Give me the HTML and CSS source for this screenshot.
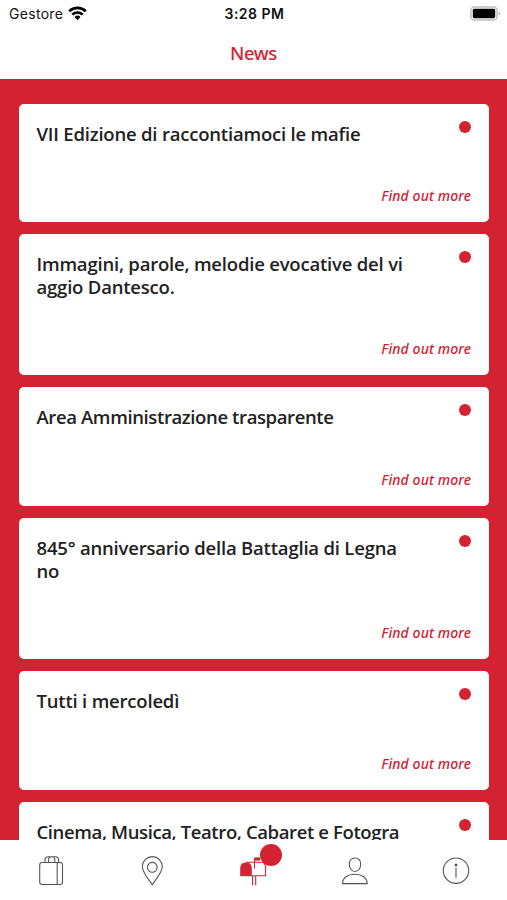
FILE: index.html
```html
<!DOCTYPE html>
<html lang="it">
<head>
  <meta charset="UTF-8" />
  <meta name="viewport" content="width=device-width, initial-scale=1.0" />
  <title>News</title>
  <link rel="stylesheet" href="styles.css">
</head>
<body>

  <div class="status-bar">
    <div class="carrier">
      <span>Gestore</span>
      <svg width="19" height="15" viewBox="0 0 19 15" fill="none" stroke="#000" stroke-width="2.6">
        <path d="M1.2 5.2a12 12 0 0 1 16.6 0" />
        <path d="M4.3 8.6a7.6 7.6 0 0 1 10.4 0" />
        <path d="M9.5 14.2l-3-3.2a4.4 4.4 0 0 1 6 0z" fill="#000" stroke="none" />
      </svg>
    </div>
    <div class="time">3:28 PM</div>
    <div class="battery">
      <svg width="31" height="15" viewBox="0 0 31 15">
        <rect x="0.9" y="0.9" width="26.2" height="13.2" rx="3.6" fill="#fff" stroke="#bdbdbd" stroke-width="1.5" />
        <rect x="2.8" y="2.8" width="22.4" height="9.4" rx="1.4" fill="#000" />
        <path d="M28.6 5.2q1.8.8 1.8 2.3t-1.8 2.3z" fill="#bdbdbd" />
      </svg>
    </div>
  </div>

  <h1>News</h1>

  <main class="news-list">
    <article class="card">
      <h2>VII Edizione di raccontiamoci le mafie</h2>
      <span class="dot"></span>
      <a class="more">Find out more</a>
    </article>
    <article class="card">
      <h2>Immagini, parole, melodie evocative del vi<br>aggio Dantesco.</h2>
      <span class="dot"></span>
      <a class="more">Find out more</a>
    </article>
    <article class="card">
      <h2 class="tight">Area Amministrazione trasparente</h2>
      <span class="dot"></span>
      <a class="more">Find out more</a>
    </article>
    <article class="card">
      <h2>845° anniversario della Battaglia di Legna<br>no</h2>
      <span class="dot"></span>
      <a class="more">Find out more</a>
    </article>
    <article class="card">
      <h2>Tutti i mercoledì</h2>
      <span class="dot"></span>
      <a class="more">Find out more</a>
    </article>
    <article class="card">
      <h2 class="tight">Cinema, Musica, Teatro, Cabaret e Fotogra</h2>
      <span class="dot"></span>
    </article>
  </main>

  <nav class="tabs">
    <a>
      <svg width="34" height="34" viewBox="0 0 34 34">
        <rect x="5.7" y="8.5" width="22.8" height="22" rx="2.4" />
        <path d="M23.2 8.5v22M11 8.5V6q0-3.2 3.2-3.2h7.2q3.2 0 3.2 3.2v2.5M14.6 8.5V6q0-3.2 3-3.2M18 2.8q2.8 0 2.8 3v2.7" />
      </svg>
    </a>
    <a>
      <svg width="34" height="34" viewBox="0 0 34 34">
        <path d="M17.3 30.6C14.5 26.6 7.3 18.6 7.3 12.6a10 10 0 0 1 20 0C27.3 18.6 20.1 26.6 17.3 30.6z" />
        <circle cx="17.3" cy="13.3" r="4.9" />
      </svg>
    </a>
    <a class="active">
      <svg width="34" height="34" viewBox="0 0 34 34">
        <path class="full" d="M4.2 21.7V14q0-5.6 5.8-5.6T15.8 14v7.7z" />
        <path d="M10 8.3h15q4.500 0 4.500 5v8.400H4.200M15.800 21.700h13.700M16.600 21.700v9.500M19.700 21.700v9.500M18.500 14.500V4.500" />
        <path class="full" d="M18.2 3.400h6v3.200h-6z" />
      </svg>
      <span class="badge"></span>
    </a>
    <a>
      <svg width="34" height="34" viewBox="0 0 34 34">
        <path d="M17 4c3.8 0 5.7 2.600 5.700 6.300s-2.200 7.200-5.700 7.200-5.700-3.500-5.700-7.200S13.200 4 17 4z" />
        <path d="M4.600 29.600c0-5.700 5-9.400 12.200-9.400s12.400 3.700 12.400 9.400z" />
      </svg>
    </a>
    <a>
      <svg width="34" height="34" viewBox="0 0 34 34">
        <circle cx="17" cy="16.7" r="12.7" />
        <path d="M17 14v9.8" />
        <circle class="full" cx="17" cy="11" r="1.5" />
      </svg>
    </a>
  </nav>

</body>
</html>
```

FILE: styles.css
```css
* {
  box-sizing: border-box;
}
body {
  margin: 0;
  height: 900px;
  display: flex;
  flex-direction: column;
  overflow: hidden;
  background-color: #fff;
  font-family: "Open Sans", sans-serif;
}
.status-bar {
  height: 27px;
  padding: 0 6px 0 9px;
  display: grid;
  grid-template-columns: 1fr auto 1fr;
  align-items: center;
  font-family: Inter, sans-serif;
  font-size: 14px;
  color: #111;
}
.carrier {
  display: flex;
  align-items: center;
  gap: 5px;
  letter-spacing: 0.3px;
}
.time {
  margin-right: 1px;
  font-weight: 600;
  letter-spacing: 0.5px;
}
.battery {
  display: flex;
  justify-content: flex-end;
}
svg {
  display: block;
}
h1 {
  margin: 0;
  height: 52px;
  line-height: 52px;
  text-align: center;
  font-family: "Noto Sans", sans-serif;
  font-size: 18.5px;
  font-weight: 500;
  letter-spacing: -0.4px;
  color: #d32232;
}
.news-list {
  height: 761px;
  padding: 24.6px 18.4px 0 19px;
  overflow: hidden;
  background-color: #d32232;
}
.card {
  display: grid;
  grid-template-columns: 1fr auto;
  grid-template-rows: auto 52px;
  align-content: space-between;
  margin-bottom: 12.3px;
  padding: 19px 17.5px 10px;
  height: 118.5px;
  border-radius: 5px;
  background-color: #fff;
}
.card:nth-child(2),
.card:nth-child(4) {
  height: 140.8px;
}
h2 {
  margin: 0;
  font-size: 18.5px;
  font-weight: 600;
  line-height: 22.4px;
  letter-spacing: -0.2px;
  white-space: nowrap;
  color: #222;
}
h2.tight {
  letter-spacing: -0.38px;
}
.dot {
  width: 12px;
  height: 12px;
  margin-top: -2px;
  border-radius: 50%;
  background-color: #d32232;
}
.more {
  grid-column: 1 / 3;
  align-self: end;
  justify-self: end;
  font-family: "Noto Sans", sans-serif;
  font-size: 14px;
  font-style: italic;
  font-weight: 500;
  line-height: 33px;
  letter-spacing: 0.1px;
  color: #d32232;
}
.tabs {
  height: 60px;
  display: grid;
  grid-template-columns: repeat(5, 1fr);
  background-color: #fff;
}
.tabs a {
  position: relative;
  display: flex;
  justify-content: center;
  padding-top: 14px;
}
.tabs svg {
  fill: none;
  stroke: #555;
  stroke-width: 1.1;
}
.tabs .full {
  fill: #555;
  stroke: none;
}
.tabs .active svg {
  stroke: #d32232;
}
.tabs .active .full {
  fill: #d32232;
}
.badge {
  position: absolute;
  left: 57px;
  top: 4px;
  width: 22px;
  height: 22px;
  border-radius: 50%;
  background-color: #d32232;
}
```
